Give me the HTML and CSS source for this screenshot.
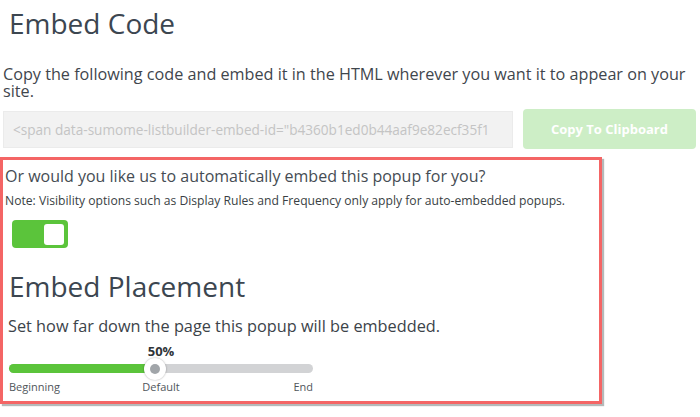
FILE: index.html
```html
<!DOCTYPE html>
<html>
<head>
<meta charset="utf-8">
<link rel="stylesheet" href="styles.css">
</head>
<body>
<main class="page">
  <h1 class="title">Embed Code</h1>
  <p class="lead">Copy the following code and embed it in the HTML wherever you want it to appear on your site.</p>
  <div class="code-row">
    <div class="code-field">&lt;span data-sumome-listbuilder-embed-id="b4360b1ed0b44aaf9e82ecf35f1</div>
    <button class="copy-btn" type="button">Copy To Clipboard</button>
  </div>
  <section class="auto-box">
    <p class="question">Or would you like us to automatically embed this popup for you?</p>
    <p class="note">Note: Visibility options such as Display Rules and Frequency only apply for auto-embedded popups.</p>
    <div class="toggle"><span class="toggle-knob"></span></div>
    <h2 class="title sub">Embed Placement</h2>
    <p class="desc">Set how far down the page this popup will be embedded.</p>
    <div class="slider">
      <div class="slider-value">50%</div>
      <div class="track">
        <div class="track-fill"></div>
        <div class="thumb"><span class="thumb-dot"></span></div>
      </div>
      <div class="slider-labels">
        <span class="lbl-start">Beginning</span>
        <span class="lbl-mid">Default</span>
        <span class="lbl-end">End</span>
      </div>
    </div>
  </section>
</main>
</body>
</html>
```
FILE: styles.css
```css
* { box-sizing: border-box; }
html, body { margin: 0; padding: 0; background: #ffffff; }
body {
  font-family: "Open Sans", "Noto Sans", sans-serif;
  color: #454c53;
  width: 700px;
  height: 417px;
  overflow: hidden;
}
.page {
  display: flex;
  flex-direction: column;
  padding: 0 4px 0 0;
}
.title {
  margin: 3px 0 0 9px;
  font-size: 28px;
  line-height: 40px;
  font-weight: 400;
  color: #3c4650;
}
.lead {
  margin: 23px 0 0 3px;
  font-size: 16.2px;
  line-height: 17px;
  color: #3f464d;
}
.code-row {
  display: flex;
  align-items: center;
  gap: 10px;
  margin: 9px 0 0 3px;
  height: 40px;
}
.code-field {
  flex: 1;
  height: 37px;
  background: #f2f2f2;
  border: 1px solid #ebebeb;
  color: #c4c4c4;
  font-size: 13.6px;
  line-height: 35px;
  padding: 0 9px;
  white-space: nowrap;
  overflow: hidden;
}
.copy-btn {
  width: 173px;
  height: 40px;
  border: none;
  border-radius: 4px;
  background: #cdeec6;
  color: #ffffff;
  font-family: "Open Sans", "Noto Sans", sans-serif;
  font-weight: 700;
  font-size: 13px;
  padding: 0;
}
.auto-box {
  margin-top: 8px;
  width: 602px;
  height: 247px;
  border: 3px solid #f46565;
  box-shadow: 2px 2px 1px rgba(90, 100, 100, 0.45);
  padding: 5px 2px 0 2px;
  display: flex;
  flex-direction: column;
  align-items: flex-start;
}
.question {
  margin: 0;
  font-size: 16px;
  line-height: 22px;
  color: #454c53;
}
.note {
  margin: 5px 0 0 0;
  font-size: 12.15px;
  line-height: 17px;
  color: #3a3f44;
}
.toggle {
  margin: 11px 0 0 7px;
  width: 56px;
  height: 28px;
  border-radius: 4px;
  background: #5bc43b;
  display: flex;
  align-items: center;
  justify-content: flex-end;
  padding-right: 4px;
}
.toggle-knob {
  width: 20px;
  height: 21px;
  border-radius: 3px;
  background: #ffffff;
}
.sub {
  margin: 18px 0 0 4px;
}
.desc {
  margin: 10px 0 0 3px;
  font-size: 16.3px;
  line-height: 20px;
  color: #3c4349;
}
.slider {
  margin: 7px 0 0 4px;
  width: 304px;
  display: flex;
  flex-direction: column;
}
.slider-value {
  text-align: center;
  font-weight: 700;
  font-size: 13px;
  line-height: 16px;
  color: #2f3438;
}
.track {
  position: relative;
  margin-top: 5px;
  height: 9px;
  border-radius: 5px;
  background: #d2d3d5;
}
.track-fill {
  width: 48%;
  height: 100%;
  border-radius: 5px 0 0 5px;
  background: #5bc43b;
}
.thumb {
  position: absolute;
  left: 48%;
  top: 50%;
  width: 22px;
  height: 22px;
  margin: -11px 0 0 -11px;
  border-radius: 50%;
  background: #ffffff;
  box-shadow: 0 0 2px rgba(0, 0, 0, 0.35);
  display: flex;
  align-items: center;
  justify-content: center;
}
.thumb-dot {
  width: 10px;
  height: 10px;
  border-radius: 50%;
  background: #a1a5a9;
}
.slider-labels {
  margin-top: 7px;
  display: grid;
  grid-template-columns: 1fr auto 1fr;
  font-size: 11px;
  line-height: 14px;
  color: #50565b;
}
.lbl-mid { text-align: center; }
.lbl-end { text-align: right; }
```
